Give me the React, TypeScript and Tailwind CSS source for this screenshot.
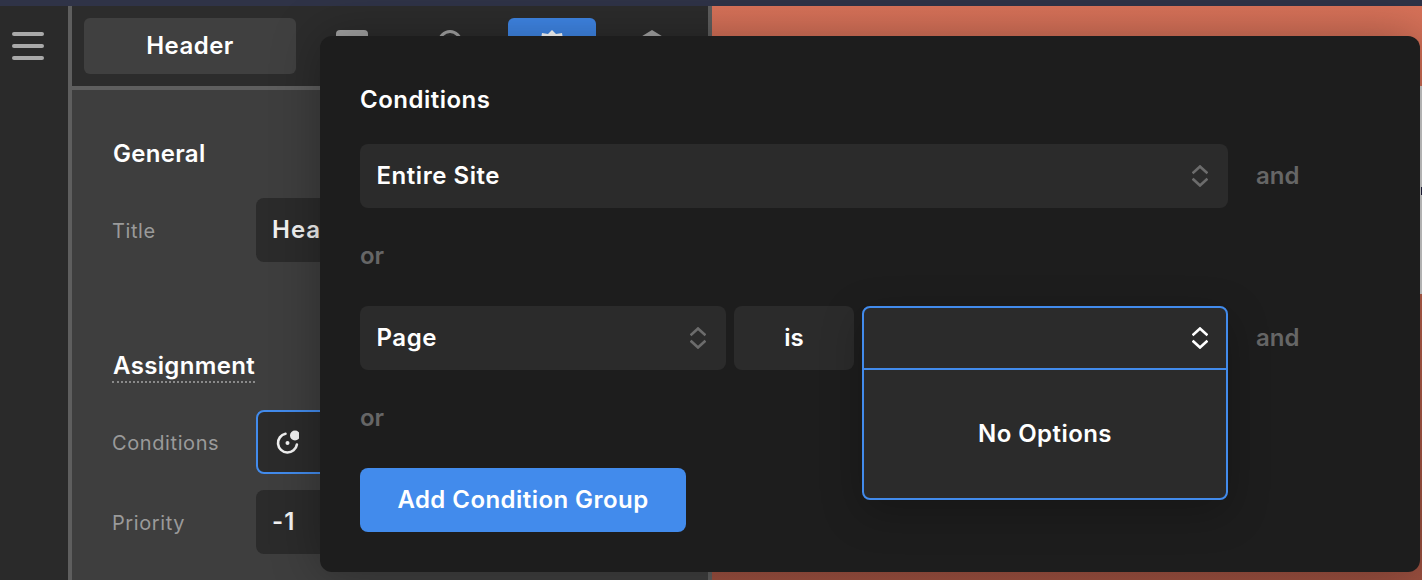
const inter = "font-['Inter',sans-serif]"

function UpDown({ className }: { className: string }) {
  return (
    <svg width="16" height="22" viewBox="0 0 16 22" fill="none" stroke="currentColor" strokeWidth="2.6" strokeLinecap="square" className={className}>
      <path d="M1.500 7.500 8 1.500l6.500 6" />
      <path d="M1.500 14.500 8 20.500l6.500-6" />
    </svg>
  )
}

function SelectBox({ label, width }: { label: string; width: string }) {
  return (
    <div className={`flex h-16 items-center justify-between rounded-lg bg-[#2b2b2b] pl-[16.5px] pr-5 text-[24px] font-semibold tracking-[0.55px] text-white ${width}`}>
      <span>{label}</span>
      <UpDown className="text-[#6c6c6c]" />
    </div>
  )
}

function Field({ label, focused, children }: { label: string; focused?: boolean; children: React.ReactNode }) {
  return (
    <div className="flex items-center">
      <span className="w-[144px] pt-[2px] text-[20px] tracking-[0.6px] text-[#9a9a9a]">{label}</span>
      <div className={`flex h-16 w-[412px] items-center rounded-lg bg-[#2b2b2b] pl-4 text-[24px] font-semibold tracking-[1px] text-[#f2f2f2] ${focused ? 'border-2 border-[#428bec]' : ''}`}>
        {children}
      </div>
    </div>
  )
}

function Tabs() {
  return (
    <div className="flex h-20 items-start bg-[#2c2c2c] pl-3 pt-3">
      <div className="flex h-14 w-[212px] items-center justify-center rounded-md bg-[#404040] text-[24px] font-semibold tracking-[0.45px] text-white">
        Header
      </div>
      <div className="ml-10 mt-3 h-8 w-8 rounded-sm bg-[#a3a3a3]" />
      <div className="ml-[70px] mt-3 h-6 w-6 rounded-full border-[3px] border-[#a3a3a3]" />
      <div className="ml-[46px] flex h-14 w-[88px] justify-center rounded-md bg-[#3f86e6] pt-3">
        <svg width="30" height="30" viewBox="0 0 30 30" fill="#fff">
          <path d="M15 0l4 4 6-1 1 6 4 6-4 6-1 6-6-1-4 4-4-4-6 1-1-6-4-6 4-6 1-6 6 1z" />
        </svg>
      </div>
      <svg width="26" height="26" viewBox="0 0 26 26" fill="#a3a3a3" className="ml-[43px] mt-3">
        <path d="M13 0l13 8-13 9L0 8z" />
      </svg>
    </div>
  )
}

export default function App() {
  return (
    <div className={`relative flex h-[580px] w-[1422px] flex-col overflow-hidden bg-[#2a2a2a] ${inter}`}>
      <div className="h-[6px] bg-[#2f3347]" />
      <div className="flex flex-1">
        {/* rail */}
        <div className="flex w-[68px] flex-col gap-2 pl-3 pt-[26px]">
          <div className="h-1 w-8 rounded-full bg-[#a9a9a9]" />
          <div className="h-1 w-8 rounded-full bg-[#a9a9a9]" />
          <div className="h-1 w-8 rounded-full bg-[#a9a9a9]" />
        </div>

        {/* settings panel */}
        <div className="flex w-[644px] flex-col border-x-4 border-[#5e5e5e]">
          <Tabs />
          <div className="flex-1 border-t-4 border-[#5e5e5e] bg-[#3e3e3e] pl-10">
            <h2 className="mt-[46px] pl-px text-[24px] font-semibold leading-9 tracking-[0.3px] text-white">General</h2>
            <div className="mt-[26px]">
              <Field label="Title">Header</Field>
            </div>
            <h2 className="mt-[89px] w-fit border-b-2 border-dotted border-[#8a8a8a] pl-px text-[24px] font-semibold leading-[30px] tracking-[0.35px] text-white">
              Assignment
            </h2>
            <div className="mt-[27px] flex flex-col gap-4">
              <Field label="Conditions" focused>
                <svg width="26" height="26" viewBox="0 0 26 26" fill="none" className="-ml-px">
                  <path d="M12.500 4.700A9.500 9.500 0 1 0 23.900 15.500" stroke="#f2f2f2" strokeWidth="2.600" strokeLinecap="round" />
                  <circle cx="14.500" cy="14" r="2" fill="#f2f2f2" />
                  <circle cx="22" cy="6.500" r="5" fill="#f2f2f2" />
                </svg>
              </Field>
              <Field label="Priority">-1</Field>
            </div>
          </div>
        </div>

        {/* page preview behind the dialog */}
        <div className="relative flex-1 bg-gradient-to-b from-[#d87259] to-[#9a4f3f]">
          <div className="absolute right-0 top-20 h-[208px] w-[2px] bg-[#d0d0d0]">
            <div className="absolute right-0 top-[101px] h-2 w-px bg-[#1e1e3a]" />
          </div>
        </div>
      </div>

      {/* conditions dialog */}
      <div className="absolute left-[320px] top-9 h-[536px] w-[1100px] rounded-xl bg-[#1d1d1d] px-10 pt-12 shadow-[0_0_50px_rgba(0,0,0,0.3)]">
        <h3 className="text-[24px] font-semibold leading-8 tracking-[0.5px] text-white">Conditions</h3>
        <div className="mt-7 flex items-center gap-7">
          <SelectBox label="Entire Site" width="w-[868px]" />
          <span className="text-[24px] font-semibold text-[#666666]">and</span>
        </div>
        <div className="flex h-[98px] items-center pb-[2px] text-[24px] font-semibold text-[#666666]">or</div>
        <div className="flex items-center gap-7">
          <div className="flex w-[868px] gap-2">
            <SelectBox label="Page" width="w-[366px]" />
            <div className="flex h-16 w-[120px] items-center justify-center rounded-lg bg-[#2b2b2b] text-[24px] font-semibold text-white">is</div>
            <div className="relative h-16 w-[366px]">
              <div className="absolute inset-x-0 top-0 z-10 h-[194px] rounded-lg border-2 border-[#428bec] bg-[#2b2b2b] shadow-[0_12px_40px_rgba(0,0,0,0.25)]">
                <div className="flex h-[62px] items-center justify-end border-b-2 border-[#428bec] pr-[18px] text-white">
                  <UpDown className="text-white" />
                </div>
                <div className="flex h-[128px] items-center justify-center text-[24px] font-semibold tracking-[0.45px] text-white">No Options</div>
              </div>
            </div>
          </div>
          <span className="text-[24px] font-semibold text-[#666666]">and</span>
        </div>
        <div className="flex h-[98px] items-center pb-[2px] text-[24px] font-semibold text-[#666666]">or</div>
        <button type="button" className="h-16 w-[326px] rounded-lg bg-[#428bec] text-[24px] font-semibold tracking-[0.45px] text-white">
          Add Condition Group
        </button>
      </div>
    </div>
  )
}
